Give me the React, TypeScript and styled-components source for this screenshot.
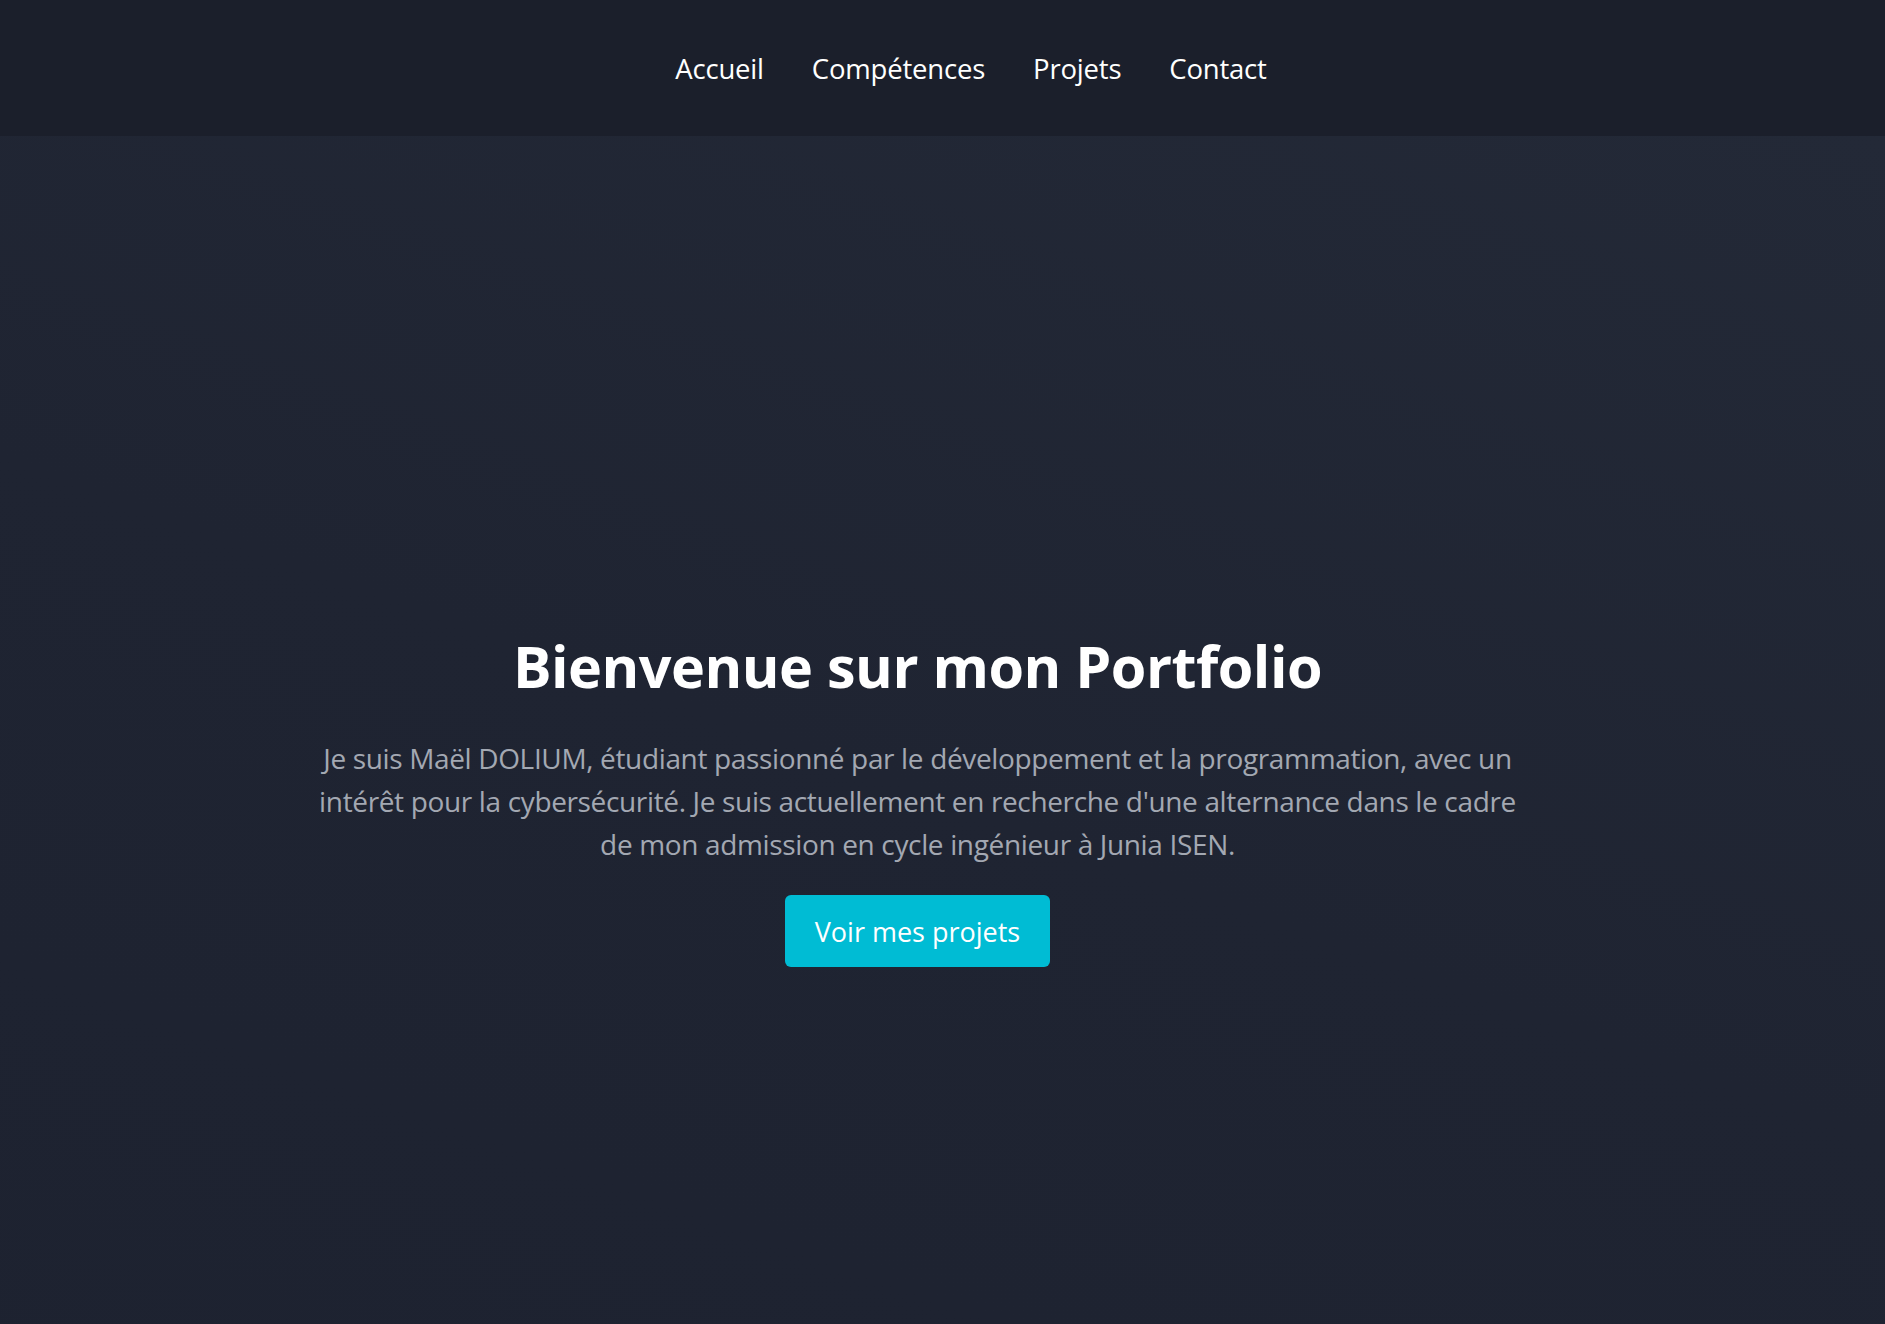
import React from "react";
import styled, { createGlobalStyle } from "styled-components";

const GlobalStyle = createGlobalStyle`
  html, body {
    margin: 0;
    padding: 0;
    background: #1e2230;
    font-family: "Open Sans", "Noto Sans", Arial, sans-serif;
    color: #ffffff;
  }
  * { box-sizing: border-box; }
`;

const Header = styled.header`
  height: 136px;
  background: #1b1f2b;
  display: flex;
  align-items: center;
  justify-content: center;
`;

const NavList = styled.nav`
  display: flex;
  gap: 48px;
  padding-left: 57px;
`;

const NavLink = styled.a`
  color: #ffffff;
  text-decoration: none;
  font-size: 27.5px;
  letter-spacing: -0.2px;
`;

const Hero = styled.section`
  min-height: 1324px;
  background: linear-gradient(20deg, #1d2230 0%, #1f2432 50%, #232937 100%);
  display: flex;
  flex-direction: column;
  align-items: center;
  justify-content: center;
  text-align: center;
  padding: 3px 74px 0 24px;
`;

const Title = styled.h1`
  margin: 0 0 36px;
  font-size: 57.5px;
  font-weight: 700;
  line-height: 1.2;
  letter-spacing: -0.5px;
  color: #ffffff;
`;

const Lead = styled.p`
  margin: 0 0 29px;
  max-width: 1200px;
  font-size: 28px;
  line-height: 43.3px;
  color: #a3a8b2;
  letter-spacing: -0.35px;
`;

const CtaButton = styled.a`
  display: inline-flex;
  align-items: center;
  justify-content: center;
  height: 72px;
  padding: 0 30px;
  background: #00bcd4;
  color: #ffffff;
  border-radius: 6px;
  font-size: 27px;
  text-decoration: none;
`;

export default function App() {
  return (
    <>
      <GlobalStyle />
      <Header>
        <NavList>
          <NavLink href="#accueil">Accueil</NavLink>
          <NavLink href="#competences">Compétences</NavLink>
          <NavLink href="#projets">Projets</NavLink>
          <NavLink href="#contact">Contact</NavLink>
        </NavList>
      </Header>
      <Hero id="accueil">
        <Title>Bienvenue sur mon Portfolio</Title>
        <Lead>
          Je suis Maël DOLIUM, étudiant passionné par le développement et la
          programmation, avec un intérêt pour la cybersécurité. Je suis
          actuellement en recherche d'une alternance dans le cadre de mon
          admission en cycle ingénieur à Junia ISEN.
        </Lead>
        <CtaButton href="#projets">Voir mes projets</CtaButton>
      </Hero>
    </>
  );
}
